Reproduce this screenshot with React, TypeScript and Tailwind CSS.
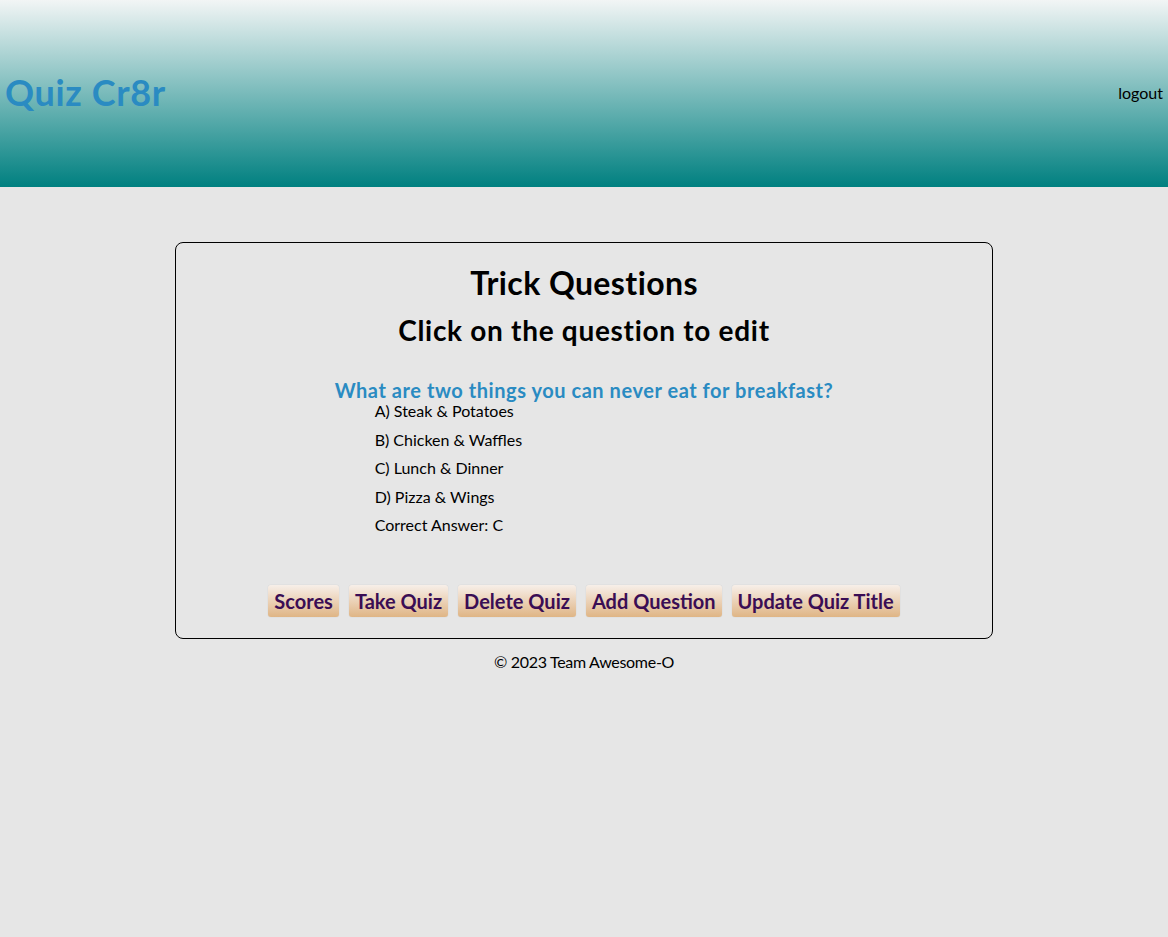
export default function App() {
  const answers = ["A) Steak & Potatoes", "B) Chicken & Waffles", "C) Lunch & Dinner", "D) Pizza & Wings"];
  const buttons = ["Scores", "Take Quiz", "Delete Quiz", "Add Question", "Update Quiz Title"];

  return (
    <div
      className="min-h-[937px] bg-[#e6e6e6] text-black"
      style={{ fontFamily: '"Trebuchet MS", Lato, sans-serif' }}
    >
      {/* Header */}
      <header className="flex h-[187px] items-center justify-between bg-linear-to-b/srgb from-[#f2f5f5] to-[#008080] pl-[5px] pr-[5px]">
        <h1 className="-mt-[3px] text-[36px] font-bold tracking-[0.65px] text-[#2a8bc2]">Quiz Cr8r</h1>
        <a className="-mt-[2px] text-[16px] text-black">logout</a>
      </header>

      {/* Quiz card */}
      <main className="mx-auto mt-[55px] w-[70%] rounded-[8px] border border-black pb-[21px] pt-[20px] text-center">
        <h2 className="text-[32px] font-bold leading-[40px] tracking-[0.4px]">Trick Questions</h2>
        <h3 className="mt-[7px] text-[28px] font-bold leading-[40px] tracking-[0.7px]">Click on the question to edit</h3>

        <div className="mt-[30px] inline-block text-left">
          <p className="text-[20px] font-bold leading-[21px] tracking-[0.55px] text-[#2a8bc2]">
            What are two things you can never eat for breakfast?
          </p>
          <ul className="pl-[40px] text-[16px] leading-[20px]">
            {answers.map((a) => (
              <li key={a} className="mb-[8.5px]">{a}</li>
            ))}
            <li>Correct Answer: C</li>
          </ul>
        </div>

        <div className="mt-[48px] flex justify-center gap-[10px]">
          {buttons.map((b) => (
            <button
              key={b}
              className="h-[32px] rounded-[3px] bg-gradient-to-b from-[#f7efe9] to-[#dfb585] px-[6px] text-[20px] font-bold text-[#3a0d54] shadow-[0_0_1px_rgba(0,0,0,0.2)]"
            >
              {b}
            </button>
          ))}
        </div>
      </main>

      <footer className="mt-[11px] text-center text-[16px] tracking-[-0.3px]">© 2023 Team Awesome-O</footer>
    </div>
  );
}
